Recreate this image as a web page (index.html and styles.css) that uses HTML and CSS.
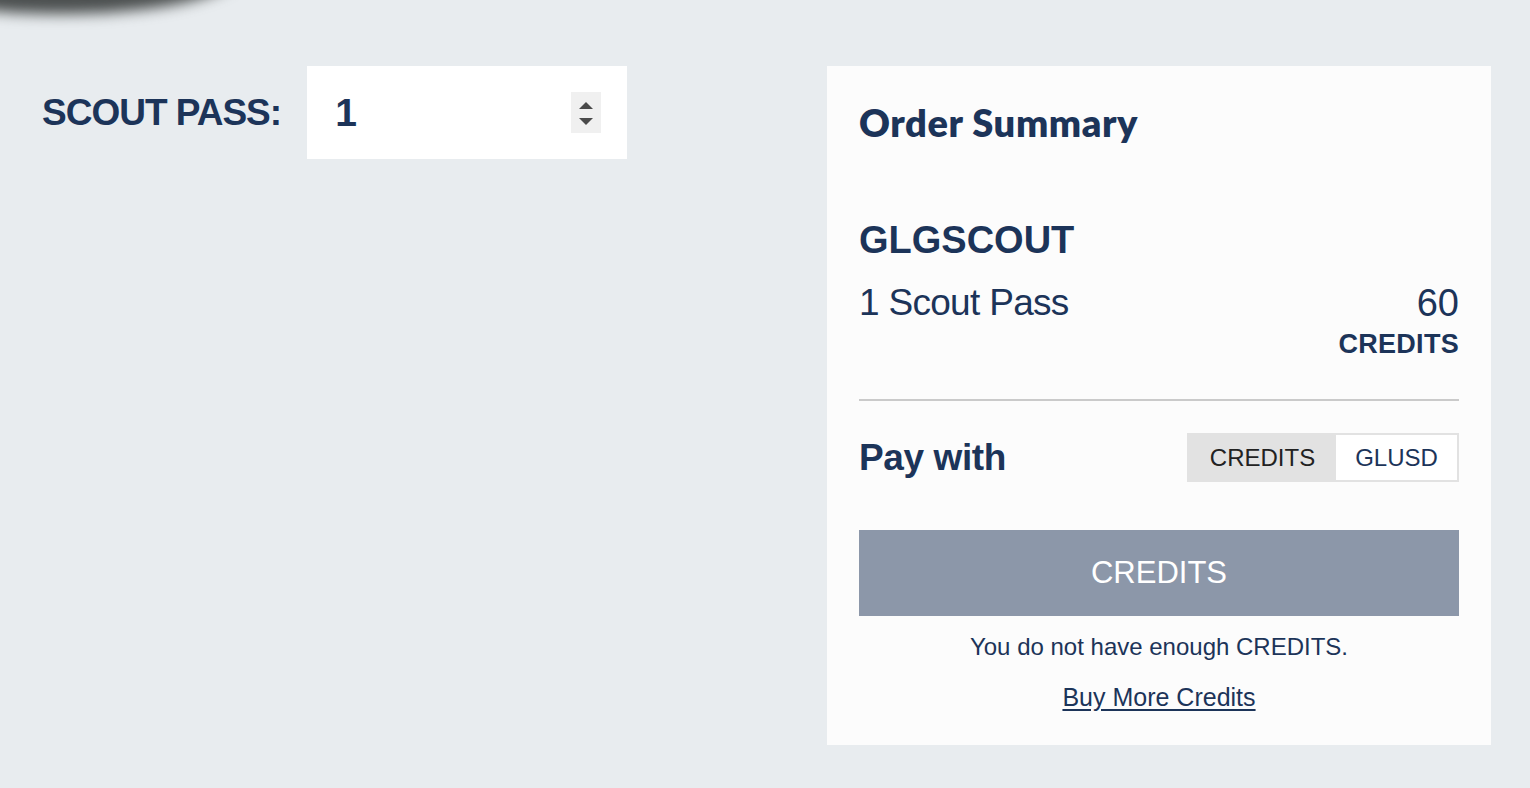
FILE: index.html
```html
<!DOCTYPE html>
<html lang="en">
<head>
<meta charset="utf-8">
<title>Scout Pass</title>
<link rel="stylesheet" href="styles.css">
</head>
<body>
<div class="shadow-blob"></div>
<main class="page">
  <section class="picker">
    <label class="picker-label" for="qty">SCOUT PASS:</label>
    <div class="qty-box">
      <span class="qty-value" id="qty">1</span>
      <span class="spinner">
        <svg width="30" height="41" viewBox="0 0 30 41"><path d="M8 17 L15 10 L22 17 Z" fill="#4a4a4a"/><path d="M8 26 L15 33 L22 26 Z" fill="#4a4a4a"/></svg>
      </span>
    </div>
  </section>
  <aside class="summary">
    <h2 class="summary-title">Order Summary</h2>
    <h3 class="product-code">GLGSCOUT</h3>
    <div class="line-item">
      <span class="item-name">1 Scout Pass</span>
      <span class="item-price"><span class="price-num">60</span><span class="price-unit">CREDITS</span></span>
    </div>
    <hr class="divider">
    <div class="pay-row">
      <span class="pay-label">Pay with</span>
      <div class="toggle">
        <span class="toggle-opt active">CREDITS</span>
        <span class="toggle-opt">GLUSD</span>
      </div>
    </div>
    <button class="pay-btn" type="button">CREDITS</button>
    <p class="notice">You do not have enough CREDITS.</p>
    <p class="buy-more"><a href="#">Buy More Credits</a></p>
  </aside>
</main>
</body>
</html>
```
FILE: styles.css
```css
* { box-sizing: border-box; }
html, body { margin: 0; padding: 0; }
body {
  background: #e8ecef;
  width: 1530px;
  height: 788px;
  overflow: hidden;
  position: relative;
  font-family: "Liberation Sans", Arial, sans-serif;
  color: #1c3459;
}
.shadow-blob {
  position: absolute;
  left: -120px;
  top: -70px;
  width: 360px;
  height: 84px;
  border-radius: 50%;
  background: #4b4f4f;
  filter: blur(7px);
}
.page {
  display: flex;
  justify-content: space-between;
  align-items: flex-start;
  padding: 66px 39px 0 42px;
}
.picker {
  display: flex;
  align-items: center;
  gap: 26px;
}
.picker-label {
  font-weight: 700;
  font-size: 37px;
  letter-spacing: -1px;
}
.qty-box {
  width: 320px;
  height: 93px;
  background: #ffffff;
  display: flex;
  align-items: center;
  justify-content: space-between;
  padding: 0 26px 0 28px;
}
.qty-value {
  font-weight: 700;
  font-size: 39px;
}
.spinner {
  display: flex;
  background: #f0f0f0;
  width: 30px;
  height: 41px;
}
.summary {
  width: 664px;
  background: #fcfcfc;
  padding: 32px 32px 33px 32px;
  display: flex;
  flex-direction: column;
}
.summary-title {
  font-family: "Lato", sans-serif;
  font-weight: 800;
  font-size: 38px;
  margin: 0;
  line-height: 48px;
  letter-spacing: 0.6px;
}
.product-code {
  margin: 71px 0 0;
  font-weight: 700;
  font-size: 38px;
  line-height: 46px;
}
.line-item {
  display: flex;
  justify-content: space-between;
  align-items: flex-start;
  margin-top: 17px;
}
.item-name { font-size: 37px; line-height: 46px; letter-spacing: -0.7px; }
.item-price {
  display: flex;
  flex-direction: column;
  align-items: flex-end;
}
.price-num { font-size: 38px; line-height: 46px; }
.price-unit { font-size: 27px; font-weight: 700; line-height: 24px; padding-top: 6px; letter-spacing: 0.3px; }
.divider {
  border: 0;
  border-top: 2px solid #cacaca;
  margin: 43px 0 0;
}
.pay-row {
  display: flex;
  justify-content: space-between;
  align-items: center;
  margin-top: 32px;
}
.pay-label {
  font-weight: 700;
  font-size: 37px;
  letter-spacing: -0.4px;
}
.toggle {
  display: flex;
  border: 2px solid #e2e2e2;
  height: 49px;
}
.toggle-opt {
  display: flex;
  align-items: center;
  justify-content: center;
  font-size: 24px;
  padding: 0 10px;
  width: 121px;
  background: #ffffff;
  color: #1c3459;
}
.toggle-opt.active {
  background: #e2e2e2;
  color: #222222;
  width: 147px;
}
.pay-btn {
  margin-top: 48px;
  height: 86px;
  border: 0;
  background: #8c97a9;
  color: #ffffff;
  font-family: inherit;
  font-size: 31px;
  width: 100%;
}
.notice {
  text-align: center;
  font-size: 24px;
  margin: 16px 0 0;
  line-height: 30px;
}
.buy-more {
  text-align: center;
  font-size: 25px;
  margin: 20px 0 0;
  line-height: 30px;
}
.buy-more a { color: #1c3459; text-decoration: underline; text-underline-offset: 3px; }
```
